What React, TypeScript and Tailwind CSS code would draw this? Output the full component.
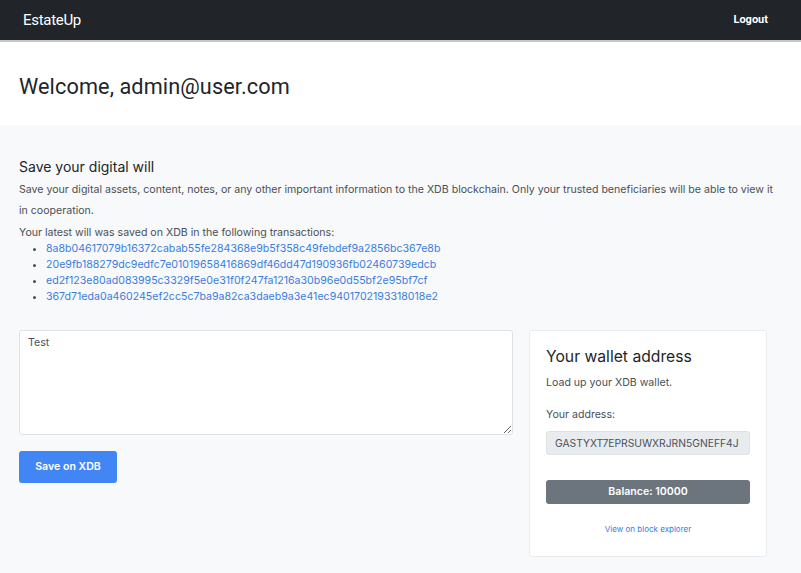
import { useState } from "react";

const txs = [
  "8a8b04617079b16372cabab55fe284368e9b5f358c49febdef9a2856bc367e8b",
  "20e9fb188279dc9edfc7e01019658416869df46dd47d190936fb02460739edcb",
  "ed2f123e80ad083995c3329f5e0e31f0f247fa1216a30b96e0d55bf2e95bf7cf",
  "367d71eda0a460245ef2cc5c7ba9a82ca3daeb9a3e41ec9401702193318018e2",
];

function Navbar() {
  return (
    <nav className="h-[42px] bg-[#212529] border-b-2 border-[#c8c8c8] flex items-center justify-between px-[23px] font-['Roboto',sans-serif]">
      <span className="text-white text-[15px] tracking-[-0.3px]">EstateUp</span>
      <a href="#" className="text-white text-[11px] font-bold mr-[10px]">Logout</a>
    </nav>
  );
}

function WalletCard() {
  return (
    <div className="w-[238px] bg-white border border-[#e9ecef] rounded-[3px] px-[16px] pt-[16px] pb-[21px]">
      <h3 className="text-[15.7px] text-[#212529] leading-tight">Your wallet address</h3>
      <p className="text-[10.6px] text-[#495057] mt-[8px]">Load up your XDB wallet.</p>
      <p className="text-[10.6px] text-[#495057] mt-[16px]">Your address:</p>
      <div className="mt-[9px] h-[24px] bg-[#e9ecef] border border-[#dee2e6] rounded-[3px] flex items-center px-[8px] text-[10.3px] text-[#495057] overflow-hidden whitespace-nowrap">
        GASTYXT7EPRSUWXRJRN5GNEFF4J
      </div>
      <button className="mt-[25px] w-full h-[24px] bg-[#6c757d] rounded-[3px] text-white text-[10.6px] font-semibold">
        Balance: 10000
      </button>
      <a href="#" className="block text-center mt-[19px] text-[8px] text-[#3b7ddd]">View on block explorer</a>
    </div>
  );
}

export default function App() {
  const [will, setWill] = useState("Test");

  return (
    <div className="min-h-[573px] bg-[#f8f9fa] font-['Inter',sans-serif] text-[#212529]">
      <Navbar />

      <header className="bg-white h-[83px] flex items-center px-[19px]">
        <h1 className="text-[21.7px] text-[#212529] font-['Roboto',sans-serif] tracking-[0.1px] mt-[8px]">Welcome, admin@user.com</h1>
      </header>

      <main className="px-[19px] pt-[31px] pb-[20px]">
        <h2 className="text-[14px] text-[#212529]">Save your digital will</h2>
        <p className="text-[10.6px] text-[#495057] leading-[21px] mt-[2px]">
          Save your digital assets, content, notes, or any other important information to the XDB blockchain. Only your trusted beneficiaries will be able to view it in cooperation.
        </p>
        <p className="text-[10.6px] text-[#495057] leading-[16px] mt-[4px]">
          Your latest will was saved on XDB in the following transactions:
        </p>
        <ul className="list-disc pl-[27px] text-[10.6px] leading-[16px] marker:text-[#495057]">
          {txs.map((tx) => (
            <li key={tx}>
              <a href="#" className="text-[#3b7ddd]">{tx}</a>
            </li>
          ))}
        </ul>

        <div className="flex gap-[16px] mt-[25px] items-start">
          <div className="w-[494px] flex flex-col">
            <textarea
              value={will}
              onChange={(e) => setWill(e.target.value)}
              className="h-[105px] bg-white border border-[#dee2e6] rounded-[3px] px-[8px] py-[4px] text-[10.6px] text-[#495057] outline-none"
            />
            <button className="mt-[16px] w-[98px] h-[32px] bg-[#4285f4] rounded-[3px] text-white text-[10.6px] font-semibold">
              Save on XDB
            </button>
          </div>
          <WalletCard />
        </div>
      </main>
    </div>
  );
}
